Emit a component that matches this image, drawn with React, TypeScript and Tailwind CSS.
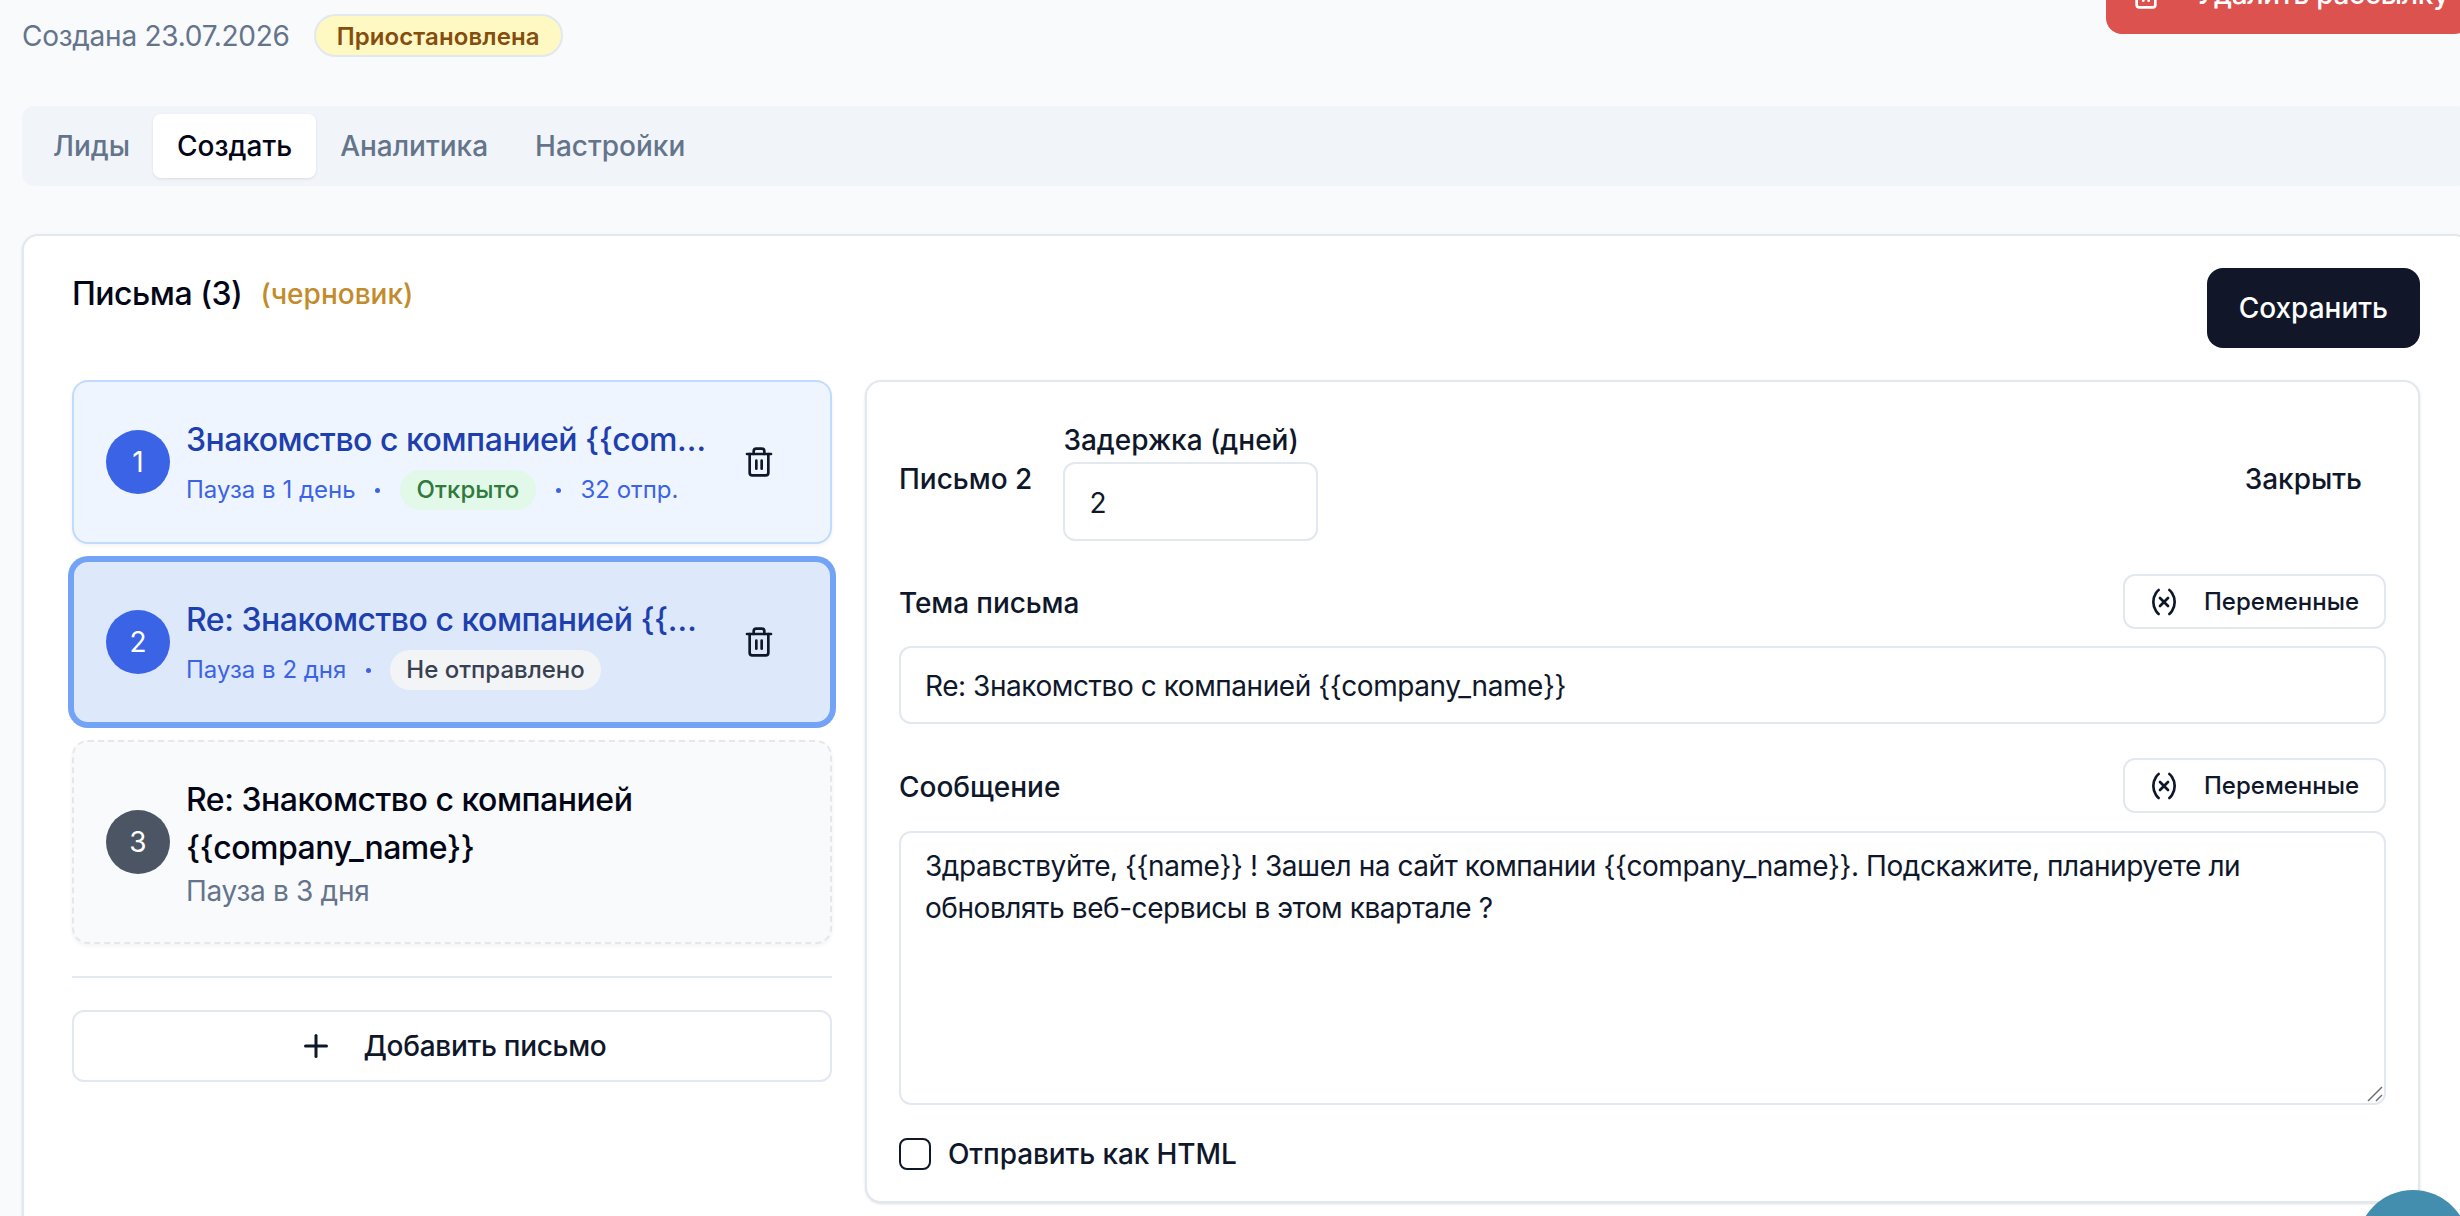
import { Plus, Trash2, Variable } from "lucide-react";

const font = "font-['Inter','Noto_Sans',sans-serif]";

function Dot() {
  return (
    <span className="flex w-3 shrink-0 justify-center">
      <span className="size-[5px] rounded-full bg-[#3b63e6]" />
    </span>
  );
}

function Letter({
  n,
  title,
  circle,
  box,
  titleColor,
  trash,
  children,
}: {
  n: number;
  title: string;
  circle: string;
  box: string;
  titleColor: string;
  trash: boolean;
  children: React.ReactNode;
}) {
  return (
    <div className={`flex items-center gap-4 rounded-2xl border-2 p-8 shadow-[0_2px_4px_rgba(15,23,42,0.05)] ${box}`}>
      <div className={`flex size-16 shrink-0 items-center justify-center rounded-full text-[28px] text-white ${circle}`}>{n}</div>
      <div className="min-w-0 flex-1">
        <div className={`pt-[2px] text-[32px] leading-[48px] font-medium tracking-[-0.48px] ${titleColor} ${trash ? "truncate" : ""}`}>{title}</div>
        {children}
      </div>
      {trash && (
        <div className="ml-[18px] mr-[23px] shrink-0 text-[#0f172a]">
          <Trash2 size={32} />
        </div>
      )}
    </div>
  );
}

function VarButton() {
  return (
    <div className="flex h-[55px] w-[263px] items-center gap-[24px] rounded-xl border-2 border-[#e2e8f0] bg-white pl-[23px] text-2xl font-medium text-[#0f172a]">
      <Variable size={32} />
      <span>Переменные</span>
    </div>
  );
}

export default function App() {
  return (
    <div className={`relative h-screen w-full overflow-hidden bg-[#f8fafc] text-[#0f172a] ${font}`}>
      <div className="-mt-[46px] w-[2470px] pl-[22px]">
        <div className="flex items-start justify-between">
          <div className="mt-[60px] flex items-center gap-6">
            <span className="text-[28px] tracking-[-0.26px] text-[#64748b]">Создана 23.07.2026</span>
            <span className="flex h-[43px] items-center rounded-full border-2 border-[#e2e8f0] bg-[#fef9c3] px-[21px] pt-[2px] text-2xl font-semibold tracking-[0.1px] text-[#854d0e]">
              Приостановлена
            </span>
          </div>
          <div className="flex h-20 items-center gap-[34px] rounded-2xl bg-[#dc524f] pr-[21px] pl-6 text-[28px] font-medium tracking-[-0.3px] text-white">
            <Trash2 size={32} />
            <span className="whitespace-nowrap">Удалить рассылку</span>
          </div>
        </div>

        <div className="mt-[49px] flex h-20 items-center rounded-xl bg-[#f1f5f9] p-2 text-[28px] font-medium text-[#64748b]">
          <div className="pr-[23px] pl-[23px]">Лиды</div>
          <div className="flex h-16 items-center rounded-lg bg-white px-6 text-[#020617] shadow-[0_1px_3px_rgba(15,23,42,0.1)]">Создать</div>
          <div className="px-6">Аналитика</div>
          <div className="px-[23px]">Настройки</div>
        </div>

        <div className="mt-12 rounded-2xl border-2 border-[#e2e8f0] bg-white px-12 pt-8 pb-12 shadow-sm">
          <div className="flex items-start justify-between">
            <div className="flex items-center gap-[18px] pt-[2px]">
              <span className="text-[32px] font-medium tracking-[-0.48px] text-[#020617]">Письма (3)</span>
              <span className="text-[28px] font-medium text-[#c28b2c]">(черновик)</span>
            </div>
            <div className="flex h-20 items-center rounded-2xl bg-[#111729] px-8 text-[28px] font-medium text-white">Сохранить</div>
          </div>

          <div className="mt-8 flex items-start gap-[33px]">
            <div className="flex w-[760px] shrink-0 flex-col">
              <Letter n={1} title="Знакомство с компанией {{company_name}}" circle="bg-[#3b63e6]" box="border-[#bfdbfe] bg-[#eff5ff]" titleColor="text-[#1e40af]" trash>
                <div className="mt-[6px] flex h-10 items-center gap-4 text-2xl text-[#3b63e6]">
                  <span>Пауза в 1 день</span>
                  <Dot />
                  <span className="flex h-10 items-center rounded-full bg-[#e2f8e8] px-[17px] font-medium tracking-[0.1px] text-[#2f7a3c]">Открыто</span>
                  <Dot />
                  <span>32 отпр.</span>
                </div>
              </Letter>
              <div className="mt-4">
                <Letter n={2} title="Re: Знакомство с компанией {{company_name}}" circle="bg-[#3b63e6]" box="border-[#72a3f6] bg-[#dde8fb] ring-4 ring-[#72a3f6]" titleColor="text-[#1e40af]" trash>
                  <div className="mt-[6px] flex h-10 items-center gap-4 text-2xl text-[#3b63e6]">
                    <span>Пауза в 2 дня</span>
                    <Dot />
                    <span className="flex h-10 items-center rounded-full bg-[#f3f4f6] px-4 font-medium text-[#374151]">Не отправлено</span>
                  </div>
                </Letter>
              </div>
              <div className="mt-4">
                <Letter n={3} title="Re: Знакомство с компанией {{company_name}}" circle="bg-[#4b5563]" box="border-dashed border-[#e5e7eb] bg-[#f9fafb]" titleColor="text-[#020617]" trash={false}>
                  <div className="mt-[1px] pb-[1px] text-[28px] leading-9 tracking-[-0.3px] text-[#64748b]">Пауза в 3 дня</div>
                </Letter>
              </div>
              <div className="mt-8 h-0.5 bg-[#e2e8f0]" />
              <div className="mt-8 flex h-[72px] items-center justify-center gap-[30px] rounded-xl border-2 border-[#e2e8f0] bg-white text-[28px] font-medium tracking-[-0.3px]">
                <Plus size={36} strokeWidth={2} />
                <span>Добавить письмо</span>
              </div>
            </div>

            <div className="h-[823px] flex-1 rounded-2xl border-2 border-[#e2e8f0] bg-white px-8 pt-[38px] shadow-sm">
              <div className="flex items-center justify-between">
                <div className="flex items-center gap-[31px]">
                  <div className="pb-[3px] text-[28px] font-medium">Письмо 2</div>
                  <div>
                    <div className="text-[28px] leading-10 font-medium">Задержка (дней)</div>
                    <div className="mt-[2px] flex h-[79px] w-[255px] items-center rounded-xl border-2 border-[#e2e8f0] px-6 pt-[2px] text-[28px]">2</div>
                  </div>
                </div>
                <div className="px-6 pb-[3px] text-[28px] font-medium">Закрыть</div>
              </div>

              <div className="mt-[33px] flex items-center justify-between">
                <div className="pt-[2px] text-[28px] font-medium tracking-[-0.1px]">Тема письма</div>
                <VarButton />
              </div>
              <div className="mt-[17px] flex h-[78px] items-center rounded-xl border-2 border-[#e2e8f0] px-6 pt-[2px] text-[28px] tracking-[-0.44px]">
                Re: Знакомство с компанией {"{{company_name}}"}
              </div>

              <div className="mt-[34px] flex items-center justify-between">
                <div className="pt-[2px] text-[28px] font-medium">Сообщение</div>
                <VarButton />
              </div>
              <div className="relative mt-[18px]">
                <textarea
                  readOnly
                  className="block h-[274px] w-full resize-none rounded-xl border-2 border-[#e2e8f0] px-6 py-[12px] text-[28px] leading-[42px] tracking-[-0.44px] outline-none"
                  value="Здравствуйте, {{name}} ! Зашел на сайт компании {{company_name}}. Подскажите, планируете ли обновлять веб-сервисы в этом квартале ?"
                />
                <svg className="absolute right-[3px] bottom-[3px]" width="16" height="16" viewBox="0 0 16 16" fill="none" stroke="#6b6b6b" strokeWidth="1.4">
                  <path d="M1 15 15 1" />
                  <path d="M9 15 15 9" />
                </svg>
              </div>

              <div className="mt-[28px] flex items-center gap-[17px]">
                <div className="size-8 rounded-lg border-2 border-[#0f172a]" />
                <span className="text-[28px] font-medium tracking-[-0.1px]">Отправить как HTML</span>
              </div>
            </div>
          </div>
        </div>
      </div>
      <div className="absolute top-[1190px] left-[2357px] size-28 rounded-full bg-[#438eae]" />
    </div>
  );
}
